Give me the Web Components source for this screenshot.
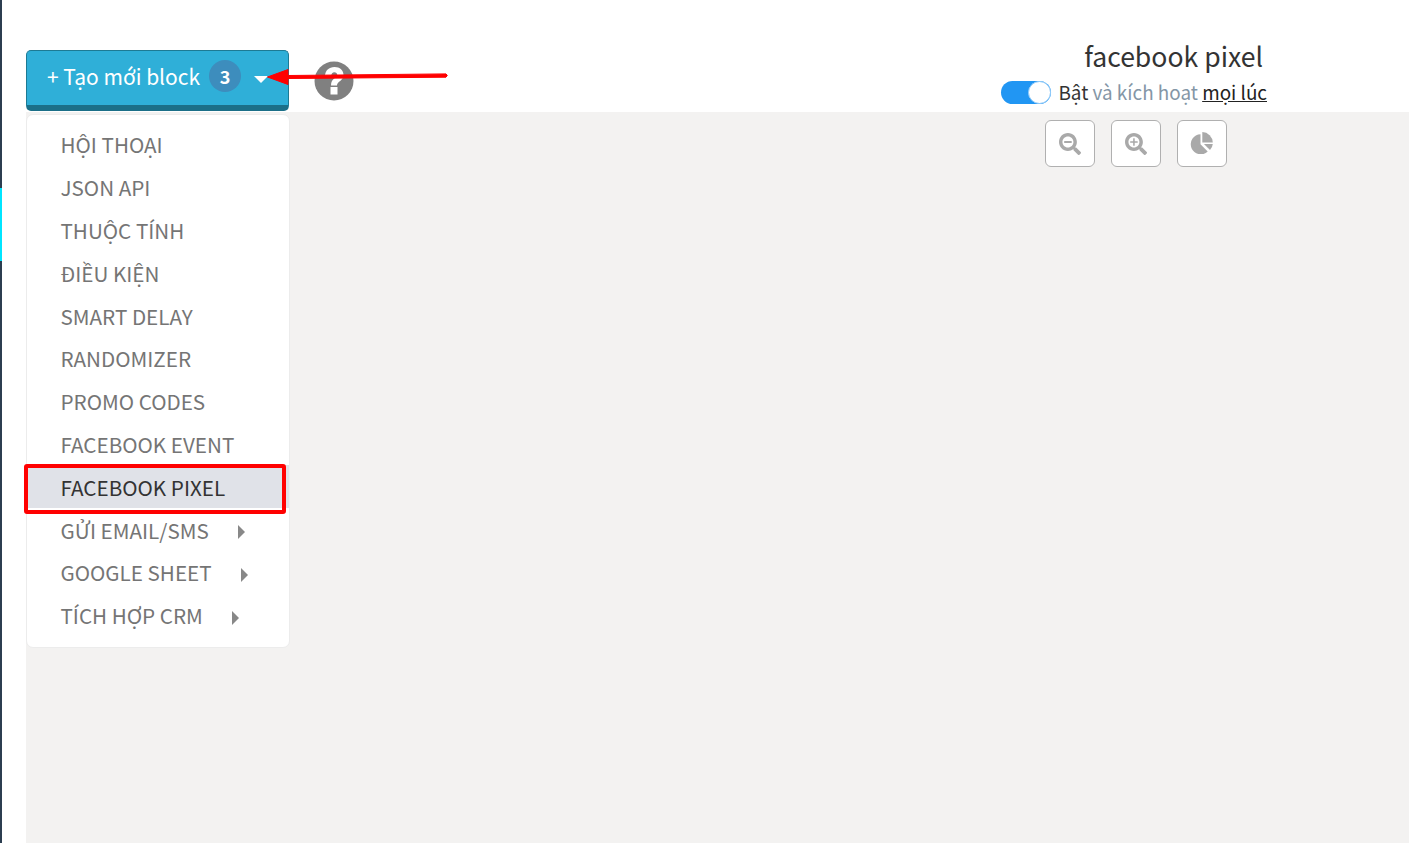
<!DOCTYPE html>
<html lang="vi"><head><meta charset="utf-8"><title>facebook pixel</title>
<style>
html,body{margin:0;height:843px;overflow:hidden;background:#fff;font-family:"Noto Sans CJK SC","Noto Sans",sans-serif}
</style></head><body>
<flow-page></flow-page>
<script>
const def=(name,css,html,setup)=>customElements.define(name,class extends HTMLElement{
  constructor(){super();this.attachShadow({mode:'open'}).innerHTML=`<style>${css}</style>${html}`;}
  connectedCallback(){if(setup)setup(this)}
});
def('side-stripe',`:host{display:flex;flex-direction:column;width:2px;flex:none;height:843px;background:#2c3e50}
i{display:block}.a{height:188px}.b{height:73px;background:#00e5ff}`,`<i class="a"></i><i class="b"></i>`);
def('toggle-switch',`:host{display:block;width:50px;height:23px;border-radius:12px;background:#2196f3;position:relative;flex:none}
i{position:absolute;right:0;top:0;width:23px;height:23px;box-sizing:border-box;border-radius:50%;background:#fff;border:1px solid #90caf9}`,`<i></i>`);
def('tool-btn',`:host{display:flex;align-items:center;justify-content:center;width:50px;height:47px;box-sizing:border-box;background:#fff;border:1px solid #b0b0b0;border-radius:6px}`,`<slot></slot>`);
def('create-button',`:host{display:flex;align-items:center;box-sizing:border-box;width:263px;height:61px;background:#2fafd8;border:1px solid #1d7a94;border-bottom:6px solid #1b6f88;border-radius:5px;color:#fff;font-size:21px;padding:0 0 4px 20px}
b{display:flex;align-items:center;justify-content:center;width:32px;height:32px;border-radius:50%;background:#3d8dbd;font-size:18px;font-weight:700;margin-left:9px}
i{width:0;height:0;border:7px solid transparent;border-top-color:#fff;border-bottom:0;margin-left:13px;margin-top:7px}
span{white-space:nowrap}`,`<span>+ Tạo mới block</span><b>3</b><i></i>`);
def('menu-item',`:host{display:flex;align-items:center;height:42.8px;padding-left:33.5px;color:#757575;font-size:20.65px;white-space:nowrap;position:relative;box-sizing:border-box}
:host([active]){background:#e0e2e8;color:#333}
:host([active])::after{content:"";position:absolute;left:-3px;width:262px;top:-1px;height:50px;box-sizing:border-box;border:4px solid #f00;border-radius:3px}
i{display:none;width:0;height:0;border:7.5px solid transparent;border-left:7px solid #888;border-right:0;margin-left:var(--gap,29.500px);margin-top:5px}
:host([sub]) i{display:block}`,`<slot></slot><i></i>`);
def('block-menu',`:host{display:block;box-sizing:border-box;width:264px;height:534px;background:#fff;border:1px solid #ececec;border-radius:7px;padding:8px 0;margin-top:2px}`,`<slot></slot>`);
def('pixel-status',`:host{display:flex;flex-direction:column;align-items:flex-end;margin-left:auto;margin-right:142px;margin-bottom:1px;color:#333}
h1{margin:0 4px 0 0;font-size:26.6px;font-weight:400;line-height:36px;color:#333}
.r{display:flex;align-items:center;gap:7px;font-size:18.9px;line-height:28px;margin-top:4px;margin-bottom:4px;white-space:nowrap}
em{font-style:normal;color:#8496a6}u{color:#222}`,
`<h1>facebook pixel</h1><div class="r"><toggle-switch></toggle-switch><span>Bật <em>và kích hoạt</em> <u>mọi lúc</u></span></div>`);
def('flow-page',`:host{display:flex;width:1409px;height:843px;overflow:hidden;position:relative}
.main{flex:1;padding-left:24px;display:flex;flex-direction:column;min-width:0}
header{display:flex;align-items:flex-end;height:112px;box-sizing:border-box;flex:none;padding-bottom:1px}
.help{margin:0 0 10.500px 24.500px;width:40px;height:40px;flex:none;display:block}
.canvas{flex:1;background:#f3f2f1;display:flex;align-items:flex-start}
.tools{display:flex;gap:16px;margin:8px 182px 0 auto}
svg.ic{width:22px;height:22px;fill:#a9a9a9;display:block}
svg.pie{width:24px;height:24px;margin-top:-3px}
.arrow{position:absolute;left:262px;top:62px;width:190px;height:30px;pointer-events:none}`,
`<side-stripe></side-stripe>
<div class="main">
<header><create-button></create-button>
<svg class="help" viewBox="0 0 40 40"><circle cx="20" cy="20" r="19.500" fill="#808080"/><path d="M11 15.500C11 9.500 15 6 20.500 6 26 6 29.500 9.500 29.500 14c0 6-6.500 6.200-6.500 10.500h-6c0-7.500 6.300-7.500 6.300-10.500 0-1.700-1.300-2.800-2.900-2.800-2 0-3 1.300-3.300 4.300z" fill="#fff"/><rect x="16.500" y="26" width="7" height="7.500" fill="#fff"/></svg>
<pixel-status></pixel-status></header>
<div class="canvas">
<block-menu>
<menu-item>HỘI THOẠI</menu-item><menu-item>JSON API</menu-item><menu-item>THUỘC TÍNH</menu-item><menu-item>ĐIỀU KIỆN</menu-item><menu-item>SMART DELAY</menu-item><menu-item>RANDOMIZER</menu-item><menu-item>PROMO CODES</menu-item><menu-item>FACEBOOK EVENT</menu-item><menu-item active>FACEBOOK PIXEL</menu-item><menu-item sub>GỬI EMAIL/SMS</menu-item><menu-item sub>GOOGLE SHEET</menu-item><menu-item sub>TÍCH HỢP CRM</menu-item>
</block-menu>
<div class="tools">
<tool-btn><svg class="ic" viewBox="0 0 512 512"><path d="M505 442.700L405.300 343c-4.500-4.500-10.600-7-17-7H372c27.600-35.300 44-79.700 44-128C416 93.100 322.900 0 208 0S0 93.100 0 208s93.100 208 208 208c48.300 0 92.700-16.400 128-44v16.300c0 6.400 2.500 12.500 7 17l99.700 99.700c9.400 9.400 24.600 9.400 33.900 0l28.300-28.300c9.400-9.400 9.400-24.600.1-34zM208 336c-70.700 0-128-57.200-128-128 0-70.700 57.200-128 128-128 70.700 0 128 57.200 128 128 0 70.700-57.200 128-128 128z"/><rect x="120" y="184" width="176" height="48" rx="8"/></svg></tool-btn>
<tool-btn><svg class="ic" viewBox="0 0 512 512"><path d="M505 442.700L405.300 343c-4.500-4.500-10.600-7-17-7H372c27.600-35.300 44-79.700 44-128C416 93.100 322.900 0 208 0S0 93.100 0 208s93.100 208 208 208c48.300 0 92.700-16.400 128-44v16.300c0 6.400 2.500 12.500 7 17l99.700 99.700c9.400 9.400 24.600 9.400 33.900 0l28.300-28.300c9.400-9.400 9.400-24.600.1-34zM208 336c-70.700 0-128-57.200-128-128 0-70.700 57.200-128 128-128 70.700 0 128 57.200 128 128 0 70.700-57.200 128-128 128z"/><rect x="120" y="190" width="176" height="36" rx="6"/><rect x="190" y="120" width="36" height="176" rx="6"/></svg></tool-btn>
<tool-btn><svg class="ic pie" viewBox="0 0 24 24"><path d="M10.500 4.300v10l7.200 7.200A10 10 0 1 1 10.500 4.300z"/><path d="M12.300 2a10.800 10.800 0 0 1 10.500 10.500H12.300z"/><path d="M13.900 14.100h8.900a10.500 10.500 0 0 1-2.800 6z"/></svg></tool-btn>
</div></div></div>
<svg class="arrow" viewBox="0 0 190 30"><path d="M5.500 15L26 7.500v6l158-1.600q2.500 1.300 0 3.300L26 16.500v6z" fill="#f00" stroke="#f00" stroke-width="1" stroke-linejoin="round"/></svg>`);
</script>
</body></html>
